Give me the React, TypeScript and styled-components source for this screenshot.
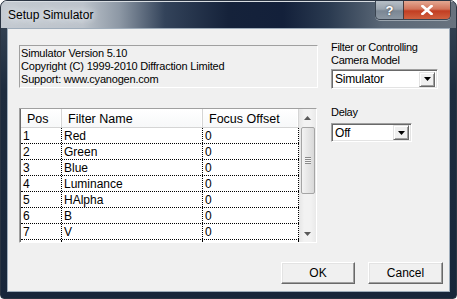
import styled, { createGlobalStyle } from "styled-components";

const GlobalStyle = createGlobalStyle`
  html, body {
    margin: 0;
    padding: 0;
    background: #ffffff;
  }
  * {
    box-sizing: border-box;
  }
`;

const Window = styled.div`
  width: 457px;
  height: 299px;
  display: flex;
  flex-direction: column;
  border: 1px solid #2a3442;
  border-radius: 7px 7px 4px 4px;
  background: linear-gradient(to bottom, #3a4858 0%, #1e2c3e 30%, #18263a 100%);
  overflow: hidden;
  font-family: "Liberation Sans", Arial, sans-serif;
`;

const TitleBar = styled.div`
  height: 27px;
  flex: none;
  display: flex;
  justify-content: space-between;
  align-items: flex-start;
  background: linear-gradient(
    to right,
    #c4cad1 0%,
    #bcc3cb 18%,
    #8d98a5 26%,
    #33435a 36%,
    #15223a 50%,
    #13203a 62%,
    #2a3a50 72%,
    #5b6877 84%,
    #68737f 100%
  );
  box-shadow: inset 0 1px 0 #d8dde2;
`;

const Title = styled.span`
  padding: 7px 0 0 7px;
  font-size: 12px;
  color: #000;
  text-shadow: 0 0 6px #e8ecf0, 0 0 10px #e8ecf0;
`;

const Controls = styled.div`
  display: flex;
  margin-right: 5px;
  border: 1px solid #3a4450;
  border-top: none;
  border-radius: 0 0 5px 5px;
  overflow: hidden;
  box-shadow: 0 1px 0 #9aa4ae;
`;

const CtrlButton = styled.div<{ $close?: boolean }>`
  width: ${(p) => (p.$close ? 47 : 27)}px;
  height: 18px;
  display: flex;
  align-items: center;
  justify-content: center;
  color: #fff;
  font-weight: bold;
  font-size: 13px;
  border-left: ${(p) => (p.$close ? "1px solid #4a3a3a" : "none")};
  background: ${(p) =>
    p.$close
      ? "linear-gradient(to bottom, #e4a892 0%, #d2745a 45%, #c23d22 55%, #d0613f 100%)"
      : "linear-gradient(to bottom, #b7bfc7 0%, #9aa4ae 45%, #7b8794 55%, #8c97a2 100%)"};
  text-shadow: 0 0 2px #333;
`;

const Client = styled.div`
  flex: 1;
  margin: 0 6px 6px 6px;
  border: 1px solid #9fadbb;
  background: #f0f0f0;
  display: flex;
  flex-direction: column;
  padding: 12px 6px 0 11px;
  font-size: 11px;
  letter-spacing: -0.2px;
  color: #000;
`;

const Top = styled.div`
  display: flex;
  gap: 13px;
`;

const LeftCol = styled.div`
  width: 299px;
  display: flex;
  flex-direction: column;
  padding-top: 4px;
`;

const InfoBox = styled.div`
  height: 43px;
  border: 1px solid;
  border-color: #a0a0a0 #ffffff #ffffff #a0a0a0;
  padding: 1px 1px 0 1px;
  line-height: 13px;
`;

const Table = styled.div`
  margin-top: 20px;
  width: 298px;
  height: 135px;
  border: 1px solid;
  border-color: #a0a0a0 #ffffff #ffffff #a0a0a0;
  display: flex;
  background: #ffffff;
`;

const Grid = styled.div`
  width: 279px;
  display: flex;
  flex-direction: column;
  border-left: 1px solid #6a6a6a;
  overflow: hidden;
  letter-spacing: 0;
`;

const HeaderRow = styled.div`
  display: flex;
  flex: none;
  height: 19px;
  border-bottom: 1px solid #d5d5d5;
  background: linear-gradient(to bottom, #ffffff 0%, #f7f8f9 100%);
`;

const HeaderCell = styled.div<{ $w: number }>`
  width: ${(p) => p.$w}px;
  flex: none;
  padding: 3px 0 0 6px;
  font-size: 12.5px;
  border-right: 1px solid #d5d5d5;
  box-shadow: inset -1px 0 0 #ffffff;
`;

const Row = styled.div<{ $filler?: boolean }>`
  display: flex;
  flex: ${(p) => (p.$filler ? "1" : "none")};
  height: ${(p) => (p.$filler ? "auto" : "16px")};
  border-bottom: ${(p) => (p.$filler ? "none" : "1px dotted #000")};
`;

const Cell = styled.div<{ $w: number }>`
  width: ${(p) => p.$w}px;
  flex: none;
  padding: 1px 0 0 2px;
  font-size: 12px;
  line-height: 14px;
  border-right: 1px dotted #000;
`;

const ScrollBar = styled.div`
  width: 17px;
  display: flex;
  flex-direction: column;
  background: linear-gradient(to right, #e6e6e6 0%, #f2f2f2 30%, #f2f2f2 70%, #e9e9e9 100%);
`;

const ScrollArrow = styled.div`
  height: 17px;
  display: flex;
  align-items: center;
  justify-content: center;
`;

const Track = styled.div`
  flex: 1;
  padding: 1px 1px;
`;

const Thumb = styled.div`
  height: 67px;
  margin-left: 1px;
  width: 14px;
  border: 1px solid #a5a5a5;
  border-radius: 2px;
  background: linear-gradient(to right, #f3f3f3 0%, #e6e6e6 50%, #d9d9d9 100%);
  display: flex;
  align-items: center;
  justify-content: center;
`;

const Grip = styled.div`
  width: 6px;
  height: 7px;
  background: repeating-linear-gradient(
    to bottom,
    #8a8a8a 0px,
    #8a8a8a 1px,
    #f4f4f4 1px,
    #f4f4f4 2px
  );
`;

const RightCol = styled.div`
  display: flex;
  flex-direction: column;
  align-items: flex-start;
  letter-spacing: -0.3px;
`;

const Label = styled.div<{ $top: number }>`
  margin-top: ${(p) => p.$top}px;
  line-height: 13px;
`;

const Select = styled.div<{ $w: number; $h: number; $top: number }>`
  width: ${(p) => p.$w}px;
  height: ${(p) => p.$h}px;
  margin-top: ${(p) => p.$top}px;
  display: flex;
  align-items: center;
  justify-content: space-between;
  background: #fff;
  border: 1px solid;
  border-color: #a0a0a0 #ffffff #ffffff #a0a0a0;
  box-shadow: inset 1px 1px 0 #696969, inset -1px -1px 0 #e3e3e3;
  padding: 0 2px 0 3px;
  font-size: 12px;
  letter-spacing: -0.2px;
`;

const DropButton = styled.div`
  width: 16px;
  height: 15px;
  display: flex;
  align-items: center;
  justify-content: center;
  background: #f0f0f0;
  border: 1px solid;
  border-color: #e3e3e3 #696969 #696969 #e3e3e3;
  box-shadow: inset 1px 1px 0 #ffffff, inset -1px -1px 0 #a0a0a0;
`;

const ButtonRow = styled.div`
  display: flex;
  justify-content: flex-end;
  gap: 13px;
  margin-top: 19px;
`;

const Button = styled.div<{ $w: number }>`
  width: ${(p) => p.$w}px;
  height: 22px;
  display: flex;
  align-items: center;
  justify-content: center;
  background: #f0f0f0;
  border: 1px solid;
  border-color: #ffffff #696969 #696969 #ffffff;
  box-shadow: inset -1px -1px 0 #a0a0a0, inset 1px 1px 0 #e3e3e3;
  font-size: 12px;
  letter-spacing: 0;
`;

const filters = [
  ["1", "Red", "0"],
  ["2", "Green", "0"],
  ["3", "Blue", "0"],
  ["4", "Luminance", "0"],
  ["5", "HAlpha", "0"],
  ["6", "B", "0"],
  ["7", "V", "0"],
];

const widths = [41, 141, 96];

function Arrow({ up, color = "#000" }: { up?: boolean; color?: string }) {
  return (
    <svg width="7" height="4" viewBox="0 0 7 4">
      <path d={up ? "M0 4 L3.5 0 L7 4 Z" : "M0 0 L7 0 L3.5 4 Z"} fill={color} />
    </svg>
  );
}

function App() {
  return (
    <>
      <GlobalStyle />
      <Window>
        <TitleBar>
          <Title>Setup Simulator</Title>
          <Controls>
            <CtrlButton>?</CtrlButton>
            <CtrlButton $close>
              <svg width="12" height="10" viewBox="0 0 12 10">
                <path
                  d="M1.5 1 L10.5 9 M10.5 1 L1.5 9"
                  stroke="#fff"
                  strokeWidth="2.6"
                  strokeLinecap="square"
                />
              </svg>
            </CtrlButton>
          </Controls>
        </TitleBar>
        <Client>
          <Top>
            <LeftCol>
              <InfoBox>
                <div>Simulator Version 5.10</div>
                <div>Copyright (C) 1999-2010 Diffraction Limited</div>
                <div>Support: www.cyanogen.com</div>
              </InfoBox>
              <Table>
                <Grid>
                  <HeaderRow>
                    <HeaderCell $w={widths[0]}>Pos</HeaderCell>
                    <HeaderCell $w={widths[1]}>Filter Name</HeaderCell>
                    <HeaderCell $w={widths[2]}>Focus Offset</HeaderCell>
                  </HeaderRow>
                  {filters.map((f) => (
                    <Row key={f[0]}>
                      {f.map((v, i) => (
                        <Cell key={i} $w={widths[i]}>
                          {v}
                        </Cell>
                      ))}
                    </Row>
                  ))}
                  <Row $filler>
                    {widths.map((w, i) => (
                      <Cell key={i} $w={w} />
                    ))}
                  </Row>
                </Grid>
                <ScrollBar>
                  <ScrollArrow>
                    <Arrow up color="#5a5a5a" />
                  </ScrollArrow>
                  <Track>
                    <Thumb>
                      <Grip />
                    </Thumb>
                  </Track>
                  <ScrollArrow>
                    <Arrow color="#5a5a5a" />
                  </ScrollArrow>
                </ScrollBar>
              </Table>
            </LeftCol>
            <RightCol>
              <Label $top={0}>
                Filter or Controlling
                <br />
                Camera Model
              </Label>
              <Select $w={107} $h={20} $top={2}>
                <span>Simulator</span>
                <DropButton>
                  <Arrow />
                </DropButton>
              </Select>
              <Label $top={17}>Delay</Label>
              <Select $w={81} $h={19} $top={4}>
                <span>Off</span>
                <DropButton>
                  <Arrow />
                </DropButton>
              </Select>
            </RightCol>
          </Top>
          <ButtonRow>
            <Button $w={74}>OK</Button>
            <Button $w={75}>Cancel</Button>
          </ButtonRow>
        </Client>
      </Window>
    </>
  );
}

export default App;
